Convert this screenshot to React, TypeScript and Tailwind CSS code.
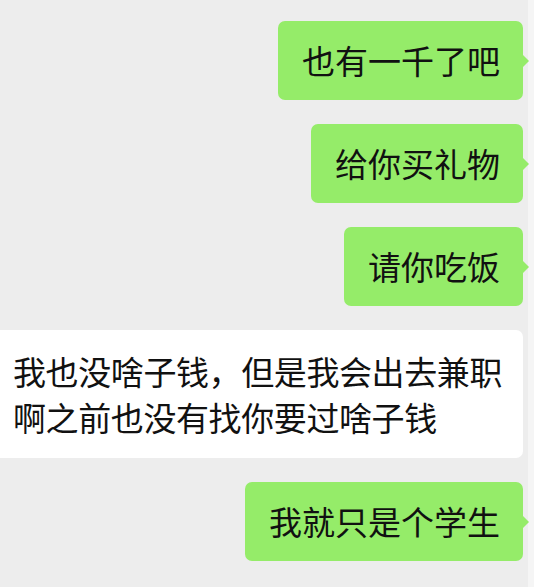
import React from 'react';

const font = { fontFamily: '"Noto Sans CJK SC", "Noto Sans", sans-serif' };

const Mine: React.FC<{ text: string }> = ({ text }) => (
  <div className="flex justify-end pr-[5px]">
    <div className="relative rounded-[7px] bg-[#95ec69] pl-6 pr-[23px] py-4 text-[33px] leading-[47px] text-[#111111]">
      {text}
      <span className="absolute top-1/2 right-[-6px] -mt-[6px] h-0 w-0 border-y-[6px] border-l-[6px] border-y-transparent border-l-[#95ec69]" />
    </div>
  </div>
);

export default function App() {
  return (
    <div className="flex h-[587px] w-[534px] overflow-hidden bg-[#ededed]" style={font}>
      <div className="flex w-[528px] flex-col gap-6 pt-[21px]">
        <Mine text="也有一千了吧" />
        <Mine text="给你买礼物" />
        <Mine text="请你吃饭" />
        <div className="-ml-[10px] w-[533px] rounded-[7px] bg-white pl-[23px] py-[18px] text-[33px] leading-[46px] tracking-[-0.4px] text-[#111111]">
          <div className="whitespace-nowrap">我也没啥子钱，但是我会出去兼职</div>
          <div className="whitespace-nowrap">啊之前也没有找你要过啥子钱</div>
        </div>
        <Mine text="我就只是个学生" />
      </div>
      <div className="w-[6px] bg-[#f5f5f5]" />
    </div>
  );
}
